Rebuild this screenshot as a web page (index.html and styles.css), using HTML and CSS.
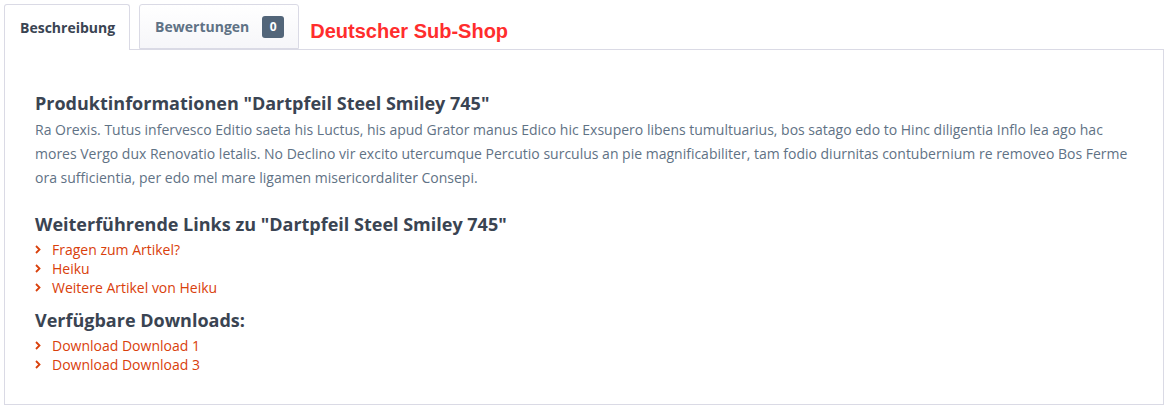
FILE: index.html
```html
<!DOCTYPE html>
<html lang="de">
<head>
  <meta charset="UTF-8"/>
  <title>Dartpfeil Steel Smiley 745</title>
  <link rel="stylesheet" href="styles.css">
</head>
<body>

  <div class="tab-menu">
    <!-- tab navigation -->
    <div class="tab-nav">
      <a class="tab-link is-active" href="#">Beschreibung</a>
      <a class="tab-link" href="#">Bewertungen <span class="badge">0</span></a>
      <span class="shop-name">Deutscher Sub-Shop</span>
    </div>

    <!-- description panel -->
    <div class="tab-content">
      <h2 class="content-title">Produktinformationen "Dartpfeil Steel Smiley 745"</h2>
      <p class="product-description">Ra Orexis. Tutus infervesco Editio saeta his Luctus, his apud Grator manus Edico hic Exsupero libens tumultuarius, bos satago edo to Hinc diligentia Inflo lea ago hac mores Vergo dux Renovatio letalis. No Declino vir excito utercumque Percutio surculus an pie magnificabiliter, tam fodio diurnitas contubernium re removeo Bos Ferme ora sufficientia, per edo mel mare ligamen misericordaliter Consepi.</p>

      <h2 class="content-title list-title links-title">Weiterführende Links zu "Dartpfeil Steel Smiley 745"</h2>
      <ul class="link-list">
        <li><a href="#"><svg class="chevron" viewBox="0 0 6 9"><polyline points="1,1 4.5,4.5 1,8"/></svg>Fragen zum Artikel?</a></li>
        <li><a href="#"><svg class="chevron" viewBox="0 0 6 9"><polyline points="1,1 4.5,4.5 1,8"/></svg>Heiku</a></li>
        <li><a href="#"><svg class="chevron" viewBox="0 0 6 9"><polyline points="1,1 4.5,4.5 1,8"/></svg>Weitere Artikel von Heiku</a></li>
      </ul>

      <h2 class="content-title list-title downloads-title">Verfügbare Downloads:</h2>
      <ul class="link-list">
        <li><a href="#"><svg class="chevron" viewBox="0 0 6 9"><polyline points="1,1 4.5,4.5 1,8"/></svg>Download Download 1</a></li>
        <li><a href="#"><svg class="chevron" viewBox="0 0 6 9"><polyline points="1,1 4.5,4.5 1,8"/></svg>Download Download 3</a></li>
      </ul>
    </div>
  </div>

</body>
</html>
```

FILE: styles.css
```css
body {
  font-family: "Open Sans", Arial, sans-serif;
  margin: 0;
  padding: 4px 4px 0 4px;
  background-color: #fff;
  color: #5f7285;
}
.tab-nav {
  display: flex;
  align-items: flex-end;
  height: 45px;
  position: relative;
  z-index: 1;
}
.tab-link {
  display: flex;
  align-items: center;
  gap: 13px;
  height: 44px;
  padding: 0 14px 0 15px;
  margin-right: 9px;
  border: 1px solid #dadae5;
  border-bottom: 0;
  border-radius: 3px 3px 0 0;
  background: linear-gradient(#fff, #f6f6f9);
  color: #5f7285;
  font-size: 14px;
  font-weight: 700;
  text-decoration: none;
  box-sizing: content-box;
}
.tab-link.is-active {
  background: #fff;
  color: #3a4452;
  height: 45px;
  margin-bottom: -1px;
}
.tab-link:not(.is-active) {
  border-bottom: 1px solid #dadae5;
  height: 43px;
}
.badge {
  display: inline-block;
  width: 22px;
  height: 22px;
  line-height: 22px;
  text-align: center;
  border-radius: 3px;
  background-color: #526579;
  color: #fff;
  font-size: 12px;
  font-weight: 700;
}
.shop-name {
  align-self: center;
  margin-left: 2px;
  margin-top: 9px;
  font-family: "Liberation Sans", Arial, sans-serif;
  font-size: 20px;
  font-weight: 700;
  color: #ff2d2d;
}
.tab-content {
  border: 1px solid #dadae5;
  padding: 41px 30px 30px 30px;
  width: 1098px;
}
.content-title {
  margin: 0 0 3px 0;
  font-size: 18px;
  line-height: 24px;
  font-weight: 700;
  color: #3a4452;
}
.product-description {
  margin: 0;
  font-size: 14px;
  line-height: 24px;
}
.list-title {
  margin-bottom: 4px;
}
.links-title {
  margin-top: 22px;
}
.downloads-title {
  margin-top: 11px;
}
.link-list {
  list-style: none;
  margin: 0;
  padding: 0;
}
.link-list li {
  display: flex;
  height: 19px;
  font-size: 14px;
  line-height: 19px;
}
.link-list a {
  display: flex;
  align-items: center;
  height: 19px;
  color: #d9400b;
  text-decoration: none;
}
.chevron {
  width: 6px;
  height: 9px;
  margin-right: 11px;
  fill: none;
  stroke: #d9400b;
  stroke-width: 1.8;
}
```
